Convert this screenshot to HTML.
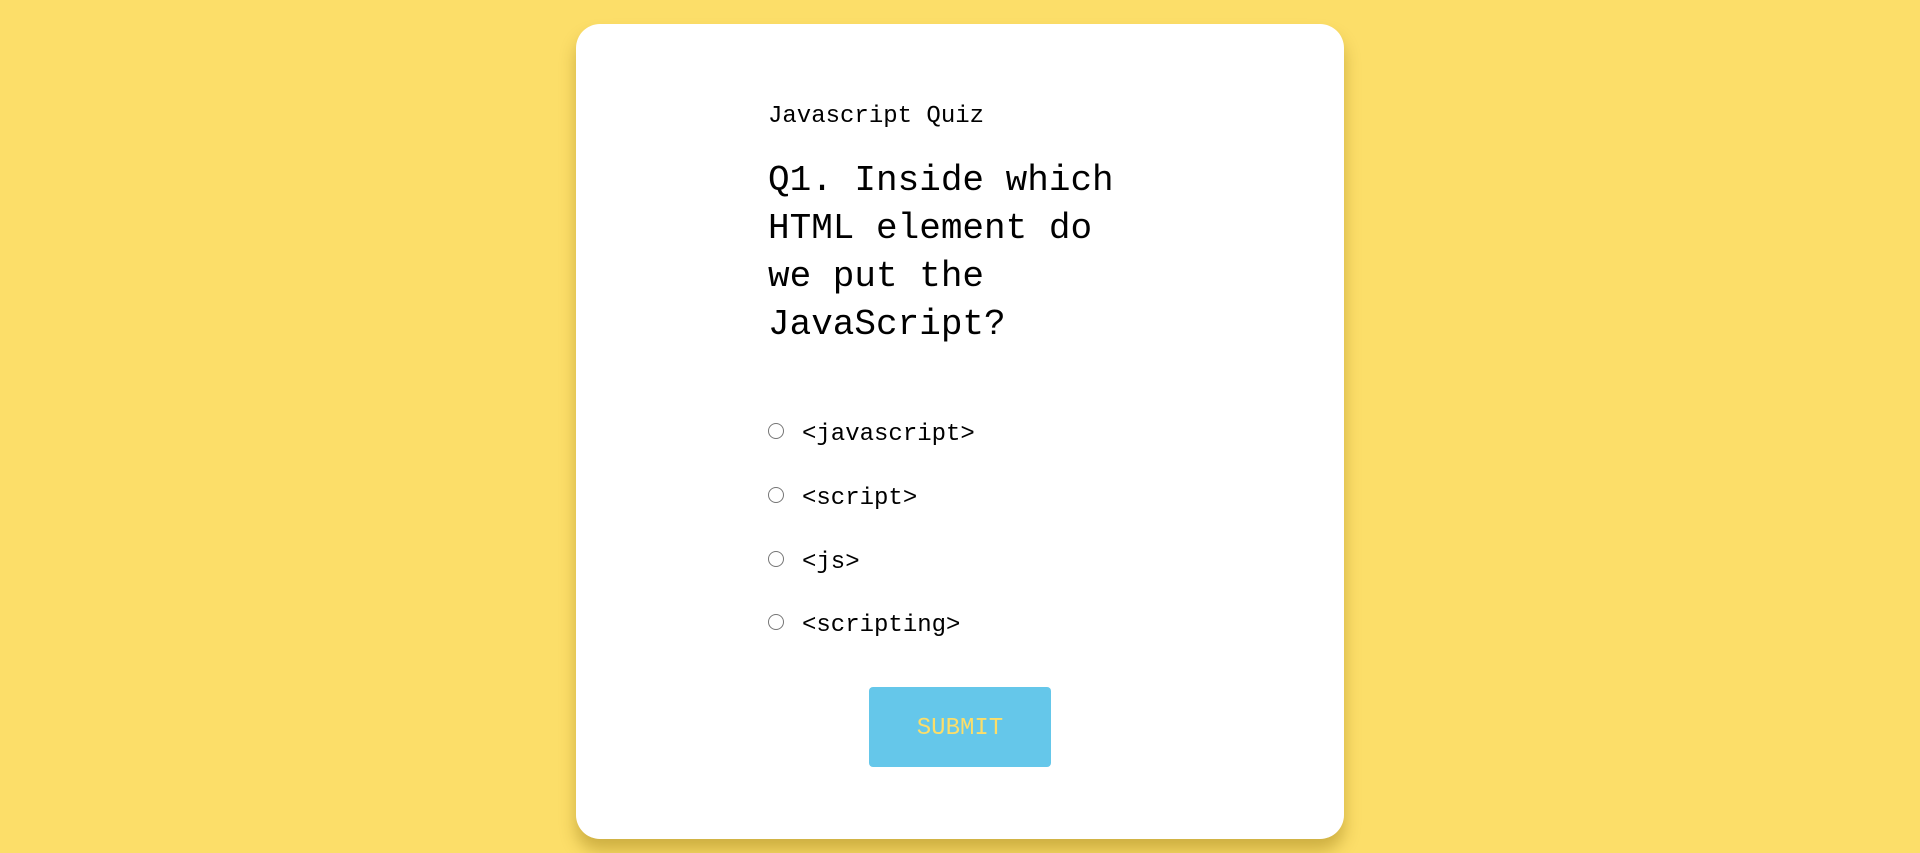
<!DOCTYPE html>
<html><head><meta charset="utf-8"><style>
html,body{margin:0;padding:0;width:1920px;height:853px;overflow:hidden;background:#fcde69;font-family:"Liberation Mono",monospace;color:#000}
.card{position:absolute;left:576px;top:24px;width:768px;height:815px;background:#fff;border-radius:24px;box-shadow:0 12px 16px rgba(150,120,20,.45)}
.t{position:absolute;left:768px;font-size:24px;white-space:nowrap}
.q{position:absolute;left:768px;top:157px;font-size:36px;line-height:48px}
.r{position:absolute;left:768px;width:16px;height:16px;border:1.5px solid #767676;border-radius:50%;box-sizing:border-box}
.btn{position:absolute;left:869px;top:687px;width:182px;height:80px;background:#65c7ea;border-radius:4px;color:#fcde69;font-size:24px;text-align:center;line-height:84px}
</style></head><body>
<div class="card"></div>
<div class="t" style="top:103px">Javascript Quiz</div>
<div class="q">Q1. Inside which<br>HTML element do<br>we put the<br>JavaScript?</div>
<div class="r" style="top:423px"></div><div class="t" style="left:802px;top:421px">&lt;javascript&gt;</div>
<div class="r" style="top:487px"></div><div class="t" style="left:802px;top:485px">&lt;script&gt;</div>
<div class="r" style="top:551px"></div><div class="t" style="left:802px;top:549px">&lt;js&gt;</div>
<div class="r" style="top:614px"></div><div class="t" style="left:802px;top:612px">&lt;scripting&gt;</div>
<div class="btn">SUBMIT</div>
</body></html>
